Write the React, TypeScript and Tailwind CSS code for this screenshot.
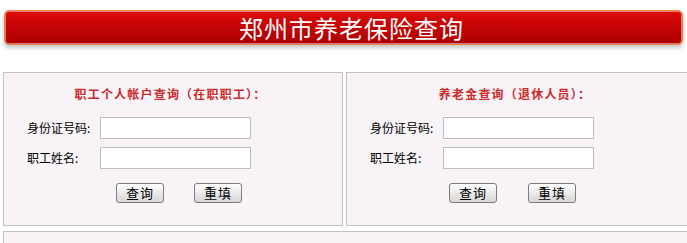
import React from "react";

const font = { fontFamily: '"Noto Sans CJK SC", "Noto Sans", sans-serif' };

function Panel({
  title,
  width,
  titleOffset,
  btnLeft,
  btnGap,
}: {
  title: string;
  width: string;
  titleOffset: string;
  btnLeft: string;
  btnGap: string;
}) {
  return (
    <div className={`${width} h-[154px] shrink-0 border border-[#c4c0c4] bg-[#f7f3f7]`}>
      <div className={`pt-[14px] text-center text-[12px] leading-[14px] font-bold tracking-[1.2px] text-[#cc2a2a] ${titleOffset}`}>
        {title}
      </div>
      <div className="mt-[16px] flex items-center pl-[23px]">
        <span className="w-[73px] text-[12px] leading-[14px] text-black">身份证号码:</span>
        <input className="h-[22px] w-[151px] border border-[#c0bcc0] bg-white outline-none" />
      </div>
      <div className="mt-[8px] flex items-center pl-[23px]">
        <span className="w-[73px] whitespace-pre text-[12px] leading-[14px] text-black">职工姓名:</span>
        <input className="h-[22px] w-[151px] border border-[#c0bcc0] bg-white outline-none" />
      </div>
      <div className={`mt-[14px] flex ${btnLeft} ${btnGap}`}>
        <button className="flex h-[20px] w-[48px] items-center justify-center rounded-[3px] border border-[#7b7b7b] bg-gradient-to-b from-white to-[#d6d6d6] text-[13px] leading-[14px] tracking-[1px] text-black">
          查询
        </button>
        <button className="flex h-[20px] w-[48px] items-center justify-center rounded-[3px] border border-[#7b7b7b] bg-gradient-to-b from-white to-[#d6d6d6] text-[13px] leading-[14px] tracking-[1px] text-black">
          重填
        </button>
      </div>
    </div>
  );
}

export default function App() {
  return (
    <div className="h-[243px] w-[687px] overflow-hidden bg-white" style={font}>
      <div className="w-[700px]">
        <div className="ml-[4px] mt-[10px] flex h-[35px] w-[679px] items-center justify-center rounded-[5px] border border-[#e8843c] bg-gradient-to-b from-[#dc0a0a] to-[#ad0000] pl-[16px] shadow-[inset_0_0_0_1px_rgba(255,220,200,0.55),0_3px_4px_rgba(0,0,0,0.22)]">
          <span className="text-[24px] leading-[26px] tracking-[1px] text-white">郑州市养老保险查询</span>
        </div>
        <div className="ml-[3px] mt-[27px] flex gap-[3px]">
          <Panel
            title="职工个人帐户查询（在职职工）："
            width="w-[340px]"
            titleOffset="pr-[5px]"
            btnLeft="pl-[112px]"
            btnGap="gap-[30px]"
          />
          <Panel
            title="养老金查询（退休人员）："
            width="w-[343px]"
            titleOffset="pr-[5px]"
            btnLeft="pl-[102px]"
            btnGap="gap-[31px]"
          />
        </div>
        <div className="ml-[3px] mt-[5px] h-[60px] w-[690px] border border-[#c4c0c4] bg-[#f7f3f7] pl-[1px] pt-[5px]">
          <span className="text-[14px] leading-[16px] font-bold text-black">查询公示说明</span>
        </div>
      </div>
    </div>
  );
}
